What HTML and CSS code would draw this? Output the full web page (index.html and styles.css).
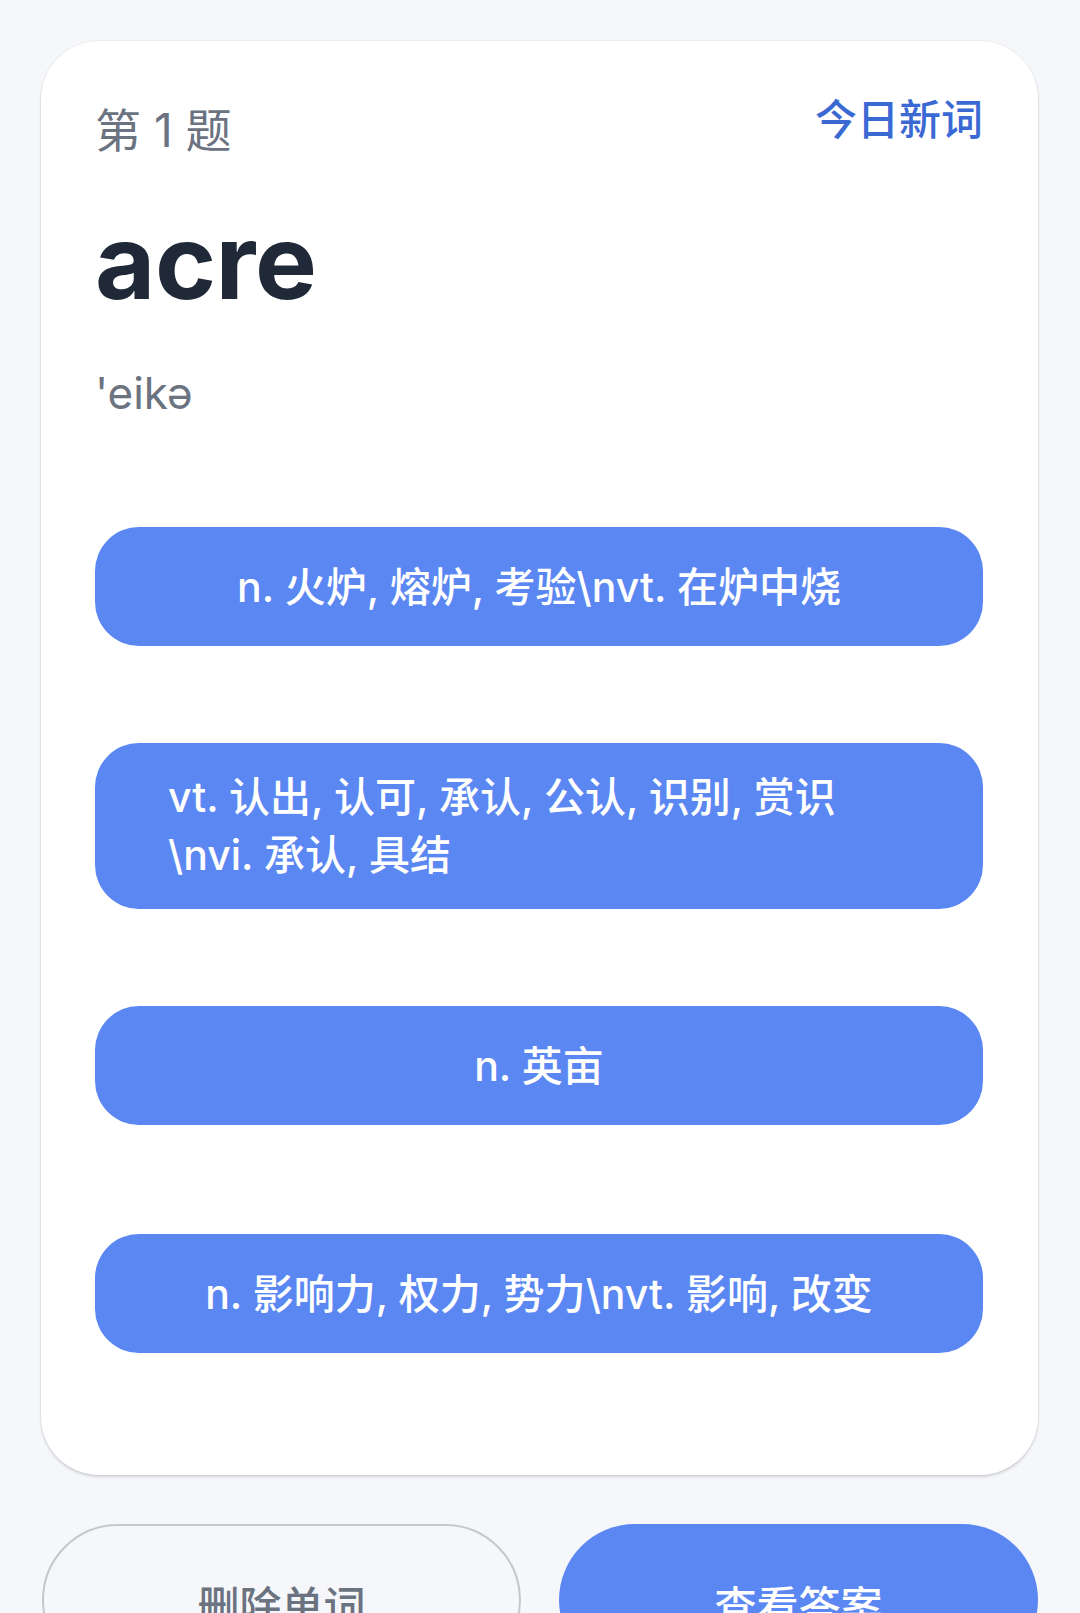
FILE: index.html
```html
<!DOCTYPE html>
<html lang="zh-CN">
<head>
<meta charset="utf-8">
<title>单词测验</title>
<link rel="stylesheet" href="styles.css">
</head>
<body>
<main class="page">
  <section class="card">
    <header class="card-head">
      <span class="q-index">第 1 题</span>
      <span class="q-tag">今日新词</span>
    </header>
    <h1 class="word">acre</h1>
    <p class="phonetic">'eikə</p>
    <div class="options">
      <button class="option"><span>n. 火炉, 熔炉, 考验<wbr>\nvt. 在炉中烧</span></button>
      <button class="option"><span>vt. 认出, 认可, 承认, 公认, 识别, 赏识<wbr>\nvi. 承认, 具结</span></button>
      <button class="option"><span>n. 英亩</span></button>
      <button class="option option-last"><span>n. 影响力, 权力, 势力<wbr>\nvt. 影响, 改变</span></button>
    </div>
  </section>
  <div class="actions">
    <button class="btn btn-outline">删除单词</button>
    <button class="btn btn-primary">查看答案</button>
  </div>
</main>
</body>
</html>
```
FILE: styles.css
```css
* { box-sizing: border-box; }
html, body { margin: 0; padding: 0; }
body {
  background: #f5f7fa;
  font-family: Inter, "Noto Sans CJK SC", "Noto Sans", sans-serif;
  overflow: hidden;
}
.page {
  padding: 41px 42px 0 41px;
}
.card {
  background: #ffffff;
  border-radius: 58px;
  padding: 52px 55px 122px 54px;
  box-shadow: 0 2px 3px rgba(0, 0, 0, 0.14), 0 0 0 1px rgba(0, 0, 0, 0.035);
}
.card-head {
  display: flex;
  justify-content: space-between;
  align-items: flex-start;
}
.q-index {
  margin-top: 7px;
  font-size: 46px;
  line-height: 60px;
  color: #6b7280;
}
.q-tag {
  margin-top: 2px;
  font-size: 42px;
  line-height: 50px;
  font-weight: 500;
  color: #3b69d4;
}
.word {
  margin: 49px 0 0;
  font-size: 104px;
  line-height: 104px;
  font-weight: 700;
  color: #1f2937;
  letter-spacing: -0.5px;
}
.phonetic {
  margin: 50px 0 0;
  font-size: 44px;
  line-height: 60px;
  color: #6b7280;
}
.options {
  margin-top: 104px;
  display: flex;
  flex-direction: column;
  gap: 97px;
}
.option {
  display: flex;
  justify-content: center;
  align-items: center;
  width: 100%;
  min-height: 119px;
  padding: 25px 73px;
  border: none;
  border-radius: 44px;
  background: #5b87f2;
  color: #ffffff;
  font-family: inherit;
  font-size: 41px;
  font-weight: 500;
  line-height: 58px;
  text-align: left;
}
.option-last { margin-top: 12px; }
.actions {
  margin-top: 49px;
  display: grid;
  grid-template-columns: 1fr 1fr;
  gap: 38px;
  padding-left: 1px;
}
.btn {
  height: 152px;
  border-radius: 76px;
  font-family: inherit;
  font-size: 42px;
  font-weight: 500;
  display: flex;
  align-items: center;
  justify-content: center;
  padding-top: 8px;
}
.btn-outline {
  background: transparent;
  border: 2px solid #c5c7cb;
  color: #6b7280;
}
.btn-primary {
  background: #5b87f2;
  border: none;
  color: #ffffff;
}
```
